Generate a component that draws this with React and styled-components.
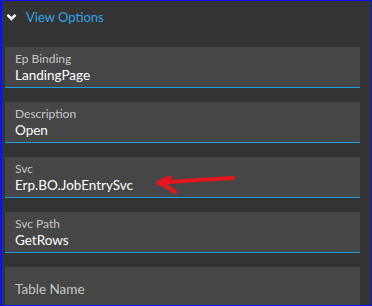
import React from "react";
import styled, { createGlobalStyle } from "styled-components";

const Global = createGlobalStyle`
  html, body { margin: 0; padding: 0; background: #333333; }
  body { font-family: Lato, "Liberation Sans", sans-serif; }
`;

const Frame = styled.div`
  width: 372px;
  height: 306px;
  box-sizing: border-box;
  background: #333333;
  border-style: solid;
  border-color: #0a12f0;
  border-width: 1px 1px 1px 2px;
  overflow: hidden;
`;

const Header = styled.div`
  display: flex;
  align-items: center;
  gap: 9px;
  height: 32px;
  padding-left: 4px;
  box-sizing: border-box;
  color: #2ea3e8;
  font-size: 13px;
`;

const List = styled.div`
  display: flex;
  flex-direction: column;
  gap: 14px;
  padding: 14px 11px 0 3px;
`;

const Field = styled.div`
  position: relative;
  height: 40px;
  background: #464646;
  border-bottom: ${(p) => (p.$line ? "1px solid #1e9ee6" : "none")};
  padding-left: 10px;
  display: flex;
  flex-direction: column;
`;

const Label = styled.div`
  font-size: 12px;
  color: #c6c6c6;
  line-height: 14px;
  margin-top: 5px;
`;

const Value = styled.div`
  font-size: 13.5px;
  color: #ffffff;
  line-height: 18px;
`;

const Placeholder = styled.div`
  font-size: 13.5px;
  color: #c6c6c6;
  line-height: 18px;
  margin-top: 13px;
`;

const Arrow = styled.svg`
  position: absolute;
  left: 145px;
  top: 9px;
  overflow: visible;
`;

const Chevron = () => (
  <svg width="11" height="8" viewBox="0 0 11 8">
    <path d="M1.5 1.8 L5.5 5.8 L9.5 1.8" fill="none" stroke="#ffffff" strokeWidth="2.6" />
  </svg>
);

export default function App() {
  const fields = [
    { label: "Ep Binding", value: "LandingPage" },
    { label: "Description", value: "Open" },
    { label: "Svc", value: "Erp.BO.JobEntrySvc", arrow: true },
    { label: "Svc Path", value: "GetRows" },
  ];
  return (
    <>
      <Global />
      <Frame>
        <Header>
          <Chevron />
          <span>View Options</span>
        </Header>
        <List>
          {fields.map((f) => (
            <Field key={f.label} $line>
              <Label>{f.label}</Label>
              <Value>{f.value}</Value>
              {f.arrow && (
                <Arrow width="80" height="20" viewBox="0 0 80 20">
                  <path
                    d="M83 12 C60 13 30 15 8 17"
                    fill="none"
                    stroke="#e3171c"
                    strokeWidth="4"
                    strokeLinecap="round"
                  />
                  <path
                    d="M20 12 C14 13 10 15 8 17 C12 18 18 21 25 26"
                    fill="none"
                    stroke="#e3171c"
                    strokeWidth="4"
                    strokeLinecap="round"
                    strokeLinejoin="round"
                  />
                </Arrow>
              )}
            </Field>
          ))}
          <Field>
            <Placeholder>Table Name</Placeholder>
          </Field>
        </List>
      </Frame>
    </>
  );
}
